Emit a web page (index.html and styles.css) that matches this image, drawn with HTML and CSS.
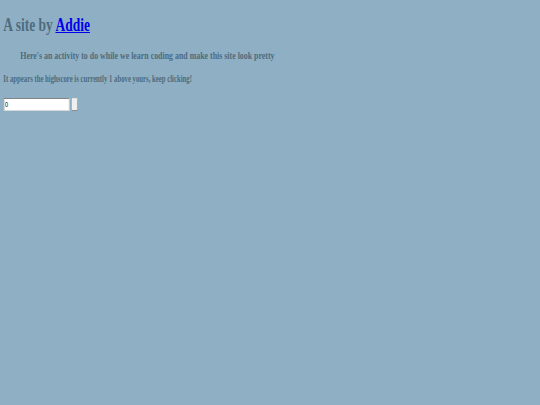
FILE: index.html
```
<!DOCTYPE html>
<html>
<head>
<meta charset="utf-8">
<title>A site by Addie</title>
<link rel="stylesheet" href="styles.css">
</head>
<body>
<div class="page">
  <h1 class="title">A site by <a class="name" href="#">Addie</a></h1>
  <blockquote class="intro">
    <h3 class="intro-text">Here's an activity to do while we learn coding and make this site look pretty</h3>
  </blockquote>
  <h4 class="score">It appears the highscore is currently 1 above yours, keep clicking!</h4>
  <div class="controls">
    <input class="counter" type="text" value="0"><button class="clicker" type="button"></button>
  </div>
</div>
</body>
</html>
```
FILE: styles.css
```
html, body {
  margin: 0;
  padding: 0;
  background: #8fb0c4;
}
.page {
  width: max-content;
  padding: 4.72px;
  transform: scaleX(0.715);
  transform-origin: 0 0;
  font-family: "Liberation Serif", "Times New Roman", serif;
  color: #4e6b7d;
}
.title {
  font-size: 18.88px;
  font-weight: bold;
  margin: 9.44px 0 12.69px;
}
.name {
  color: #0000ee;
  text-decoration: underline;
}
.intro {
  margin: 12.69px 23.6px;
}
.intro-text {
  font-size: 11.04px;
  font-weight: bold;
  margin: 0;
}
.score {
  font-size: 9.44px;
  font-weight: bold;
  margin: 13.5px 0 0;
}
.controls {
  display: flex;
  align-items: stretch;
  gap: 2.36px;
  margin-top: 13.4px;
}
.counter {
  width: 92.6px;
  height: 13px;
  box-sizing: border-box;
  padding: 0.59px 1.18px;
  border: 1.18px inset #d8d8d8;
  background: #fff;
  font-family: "Liberation Sans", Arial, sans-serif;
  font-size: 7.87px;
  color: #000;
}
.clicker {
  width: 9.44px;
  height: 13px;
  padding: 0;
  border: 1.18px outset #e0e0e0;
  background: #efefef;
  border-radius: 1.18px;
}
```
